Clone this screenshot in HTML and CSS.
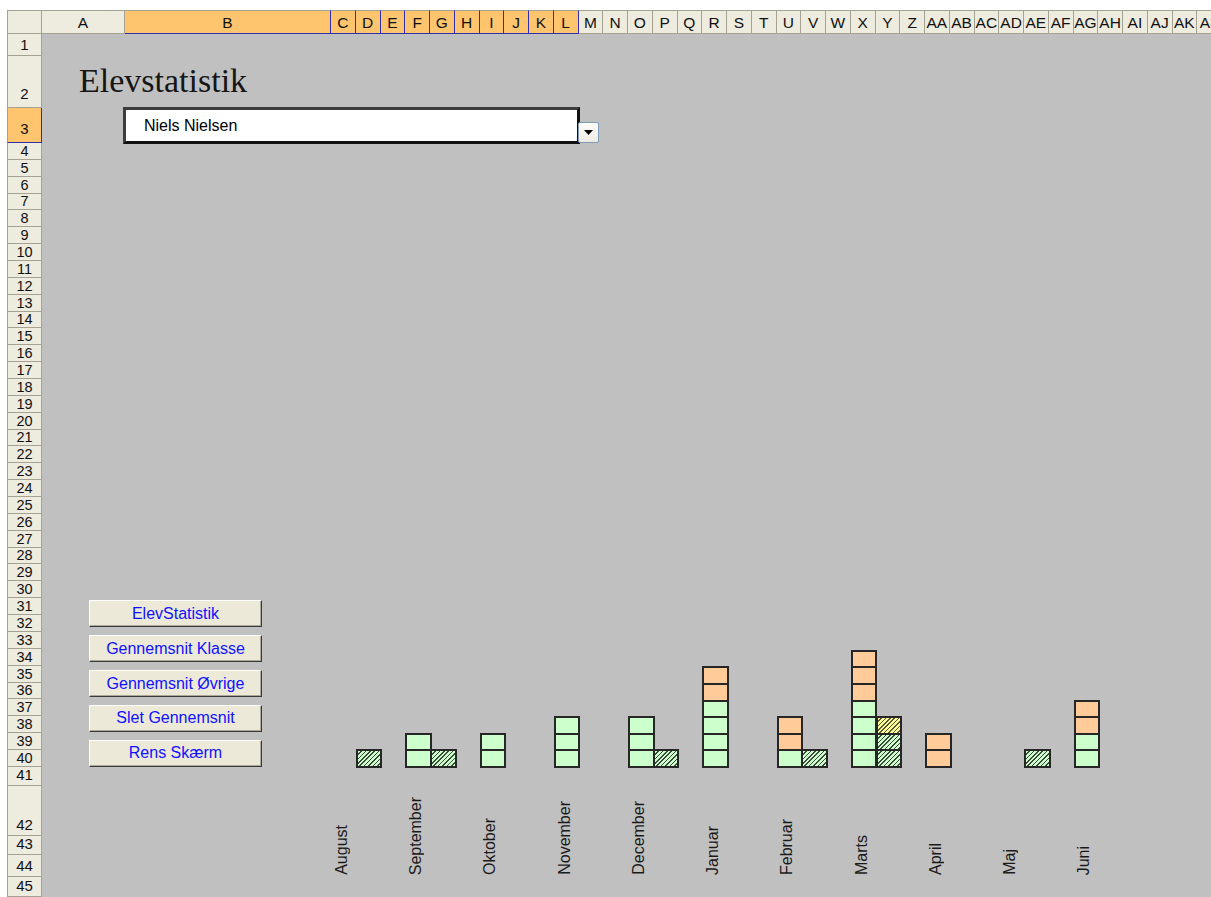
FILE: index.html
```html
<!DOCTYPE html>
<html lang="da">
<head>
<meta charset="utf-8">
<title>Elevstatistik</title>
<link rel="stylesheet" href="styles.css">
</head>
<body>
<div class="sheet">
  <div class="corner"></div>

  <div class="colheads">
    <span>A</span><span class="sel">B</span><span class="sel">C</span><span class="sel">D</span><span class="sel">E</span><span class="sel">F</span><span class="sel">G</span><span class="sel">H</span><span class="sel">I</span><span class="sel">J</span><span class="sel">K</span><span class="sel">L</span><span>M</span><span>N</span><span>O</span><span>P</span><span>Q</span><span>R</span><span>S</span><span>T</span><span>U</span><span>V</span><span>W</span><span>X</span><span>Y</span><span>Z</span><span>AA</span><span>AB</span><span>AC</span><span>AD</span><span>AE</span><span>AF</span><span>AG</span><span>AH</span><span>AI</span><span>AJ</span><span>AK</span><span>AL</span>
  </div>

  <div class="rowheads">
    <span>1</span><span class="mid">2</span><span class="sel mid">3</span><span class="t">4</span><span class="t">5</span><span class="t">6</span><span class="t">7</span><span class="t">8</span><span class="t">9</span><span class="t">10</span><span class="t">11</span><span class="t">12</span><span class="t">13</span><span class="t">14</span><span class="t">15</span><span class="t">16</span><span class="t">17</span><span class="t">18</span><span class="t">19</span><span class="t">20</span><span class="t">21</span><span class="t">22</span><span class="t">23</span><span class="t">24</span><span class="t">25</span><span class="t">26</span><span class="t">27</span><span class="t">28</span><span class="t">29</span><span class="t">30</span><span class="t">31</span><span class="t">32</span><span class="t">33</span><span class="t">34</span><span class="t">35</span><span class="t">36</span><span class="t">37</span><span class="t">38</span><span class="t">39</span><span class="t">40</span><span>41</span><span>42</span><span>43</span><span>44</span><span>45</span>
  </div>

  <div class="body">
    <!-- monthly chart: one 3-column group per month (own marks, average marks, gap) -->
    <div class="chart">
      <div class="bars"><div class="bar"></div><div class="bar"><i class="blk gh"></i></div></div>
      <div class="bars"><div class="bar"><i class="blk g"></i><i class="blk g"></i></div><div class="bar"><i class="blk gh"></i></div></div>
      <div class="bars"><div class="bar"><i class="blk g"></i><i class="blk g"></i></div><div class="bar"></div></div>
      <div class="bars"><div class="bar"><i class="blk g"></i><i class="blk g"></i><i class="blk g"></i></div><div class="bar"></div></div>
      <div class="bars"><div class="bar"><i class="blk g"></i><i class="blk g"></i><i class="blk g"></i></div><div class="bar"><i class="blk gh"></i></div></div>
      <div class="bars"><div class="bar"><i class="blk o"></i><i class="blk o"></i><i class="blk g"></i><i class="blk g"></i><i class="blk g"></i><i class="blk g"></i></div><div class="bar"></div></div>
      <div class="bars"><div class="bar"><i class="blk o"></i><i class="blk o"></i><i class="blk g"></i></div><div class="bar"><i class="blk gh"></i></div></div>
      <div class="bars"><div class="bar"><i class="blk o"></i><i class="blk o"></i><i class="blk o"></i><i class="blk g"></i><i class="blk g"></i><i class="blk g"></i><i class="blk g"></i></div><div class="bar"><i class="blk yh"></i><i class="blk gh"></i><i class="blk gh"></i></div></div>
      <div class="bars"><div class="bar"><i class="blk o"></i><i class="blk o"></i></div><div class="bar"></div></div>
      <div class="bars"><div class="bar"></div><div class="bar"><i class="blk gh"></i></div></div>
      <div class="bars"><div class="bar"><i class="blk o"></i><i class="blk o"></i><i class="blk g"></i><i class="blk g"></i></div><div class="bar"></div></div>

      <div class="lbl"><span>August</span></div>
      <div class="lbl"><span>September</span></div>
      <div class="lbl"><span>Oktober</span></div>
      <div class="lbl"><span>November</span></div>
      <div class="lbl"><span>December</span></div>
      <div class="lbl"><span>Januar</span></div>
      <div class="lbl"><span>Februar</span></div>
      <div class="lbl"><span>Marts</span></div>
      <div class="lbl"><span>April</span></div>
      <div class="lbl"><span>Maj</span></div>
      <div class="lbl"><span>Juni</span></div>
    </div>

    <h1 class="title">Elevstatistik</h1>

    <div class="combo">
      Niels Nielsen
      <span class="combo-btn"><svg width="9" height="5" viewBox="0 0 9 5"><path d="M0 0h9L4.5 5z" fill="#000"/></svg></span>
    </div>

    <div class="buttons">
      <button class="btn">ElevStatistik</button>
      <button class="btn">Gennemsnit Klasse</button>
      <button class="btn">Gennemsnit Øvrige</button>
      <button class="btn">Slet Gennemsnit</button>
      <button class="btn">Rens Skærm</button>
    </div>
  </div>
</div>
</body>
</html>
```

FILE: styles.css
```css
* { box-sizing: border-box; }

html, body {
  margin: 0;
  height: 100%;
  overflow: hidden;
  background: #fff;
}

body {
  padding: 10px 0 0 7px;
  font-family: "Liberation Sans", Arial, sans-serif;
}

.sheet {
  --cols: 83px 206px repeat(36, 24.75px);
  --rows: 22px 52px 35px repeat(37, 16.865px) 19px 50px 19px 22px 20px;
  display: grid;
  grid-template-columns: 35px max-content;
  grid-template-rows: 24px max-content;
  width: max-content;
  background: #c0c0c0;
}

/* headers */
.corner {
  background: #eeebdf;
  border: 1px solid #a5a294;
}

.colheads {
  display: grid;
  grid-template-columns: var(--cols);
}

.colheads span {
  display: flex;
  align-items: center;
  justify-content: center;
  background: #eeebdf;
  border-top: 1px solid #a5a294;
  border-right: 1px solid #a5a294;
  border-bottom: 1px solid #a5a294;
  font-size: 15.5px;
  color: #111;
  white-space: nowrap;
  padding-top: 1px;
}

.colheads .sel {
  background: #fec46e;
  border-right-color: #2e2eae;
  border-bottom-color: #2e2eae;
}

.rowheads {
  display: grid;
  grid-template-rows: var(--rows);
}

.rowheads span {
  display: flex;
  align-items: flex-end;
  justify-content: center;
  background: #eeebdf;
  border-left: 1px solid #a5a294;
  border-right: 1px solid #a5a294;
  border-bottom: 1px solid #a5a294;
  font-size: 15px;
  line-height: 15px;
  padding-bottom: 3px;
  color: #111;
  overflow: hidden;
}

.rowheads .mid { padding-bottom: 6px; }

.rowheads .t {
  font-size: 14.5px;
  line-height: 14px;
  padding-bottom: 1px;
}

.rowheads .sel {
  background: #fec46e;
  border-right-color: #2e2eae;
  border-bottom-color: #2e2eae;
}

/* worksheet area */
.body {
  display: grid;
  grid-template-columns: var(--cols);
  grid-template-rows: var(--rows);
}

.title {
  grid-column: 1 / 3;
  grid-row: 2;
  align-self: start;
  margin: 8px 0 0 37px;
  font-family: "Liberation Serif", "Times New Roman", serif;
  font-weight: normal;
  font-size: 34px;
  line-height: 33px;
  color: #151515;
}

.combo {
  grid-column: 2 / 13;
  grid-row: 3;
  position: relative;
  margin: -1px -1.5px -1px -2px;
  display: flex;
  align-items: center;
  padding-left: 18px;
  background: #fff;
  border: 3px solid #111;
  border-top-color: #3c3c3c;
  border-left-color: #3c3c3c;
  font-size: 16px;
  color: #000;
}

.combo-btn {
  position: absolute;
  right: -21.5px;
  bottom: -2px;
  width: 21px;
  height: 21px;
  display: flex;
  align-items: center;
  justify-content: center;
  background: linear-gradient(#fdfdfb, #eceae2);
  border: 1px solid #7f9db9;
  border-radius: 2px;
}

.buttons {
  grid-column: 1 / 3;
  grid-row: 31 / 41;
  display: flex;
  flex-direction: column;
  gap: 8px;
  padding: 2px 0 0 47px;
}

.btn {
  width: 173px;
  height: 27px;
  margin: 0;
  padding: 0;
  display: flex;
  align-items: center;
  justify-content: center;
  background: #ece9d8;
  border: 1px solid;
  border-color: #fff #3a3a3a #3a3a3a #fff;
  box-shadow: inset -1px -1px #aca899;
  font-family: "Liberation Sans", Arial, sans-serif;
  font-size: 16px;
  color: #1010ff;
}

/* chart */
.chart {
  grid-column: 3 / -1;
  grid-row: 1 / -1;
  display: grid;
  grid-template-columns: repeat(12, 74.25px);
  grid-template-rows: 733px 19px 91px 20px;
}

.bars {
  grid-row: 1;
  display: flex;
  align-items: flex-end;
  margin-bottom: -1px;
}

.bar {
  width: 24.75px;
  display: flex;
  flex-direction: column;
}

.blk {
  display: block;
  width: 26.5px;
  height: 18.6px;
  border: 2px solid #262626;
}

.blk + .blk { margin-top: -2px; }

.g { background: #ccffcc; }
.o { background: #ffcc99; }
.gh { background: repeating-linear-gradient(135deg, #ccffcc 0 2px, #3b4a3b 2px 3.1px); }
.yh { background: repeating-linear-gradient(135deg, #ffff99 0 2px, #5a5a3a 2px 3.1px); }

.lbl {
  grid-row: 3;
  justify-self: start;
  width: 24.75px;
  display: flex;
  justify-content: center;
  align-items: flex-end;
  padding: 0 3px 2px 0;
}

.lbl span {
  writing-mode: vertical-rl;
  transform: rotate(180deg);
  font-size: 16px;
  line-height: 16px;
  color: #1a1a1a;
  white-space: nowrap;
}
```
